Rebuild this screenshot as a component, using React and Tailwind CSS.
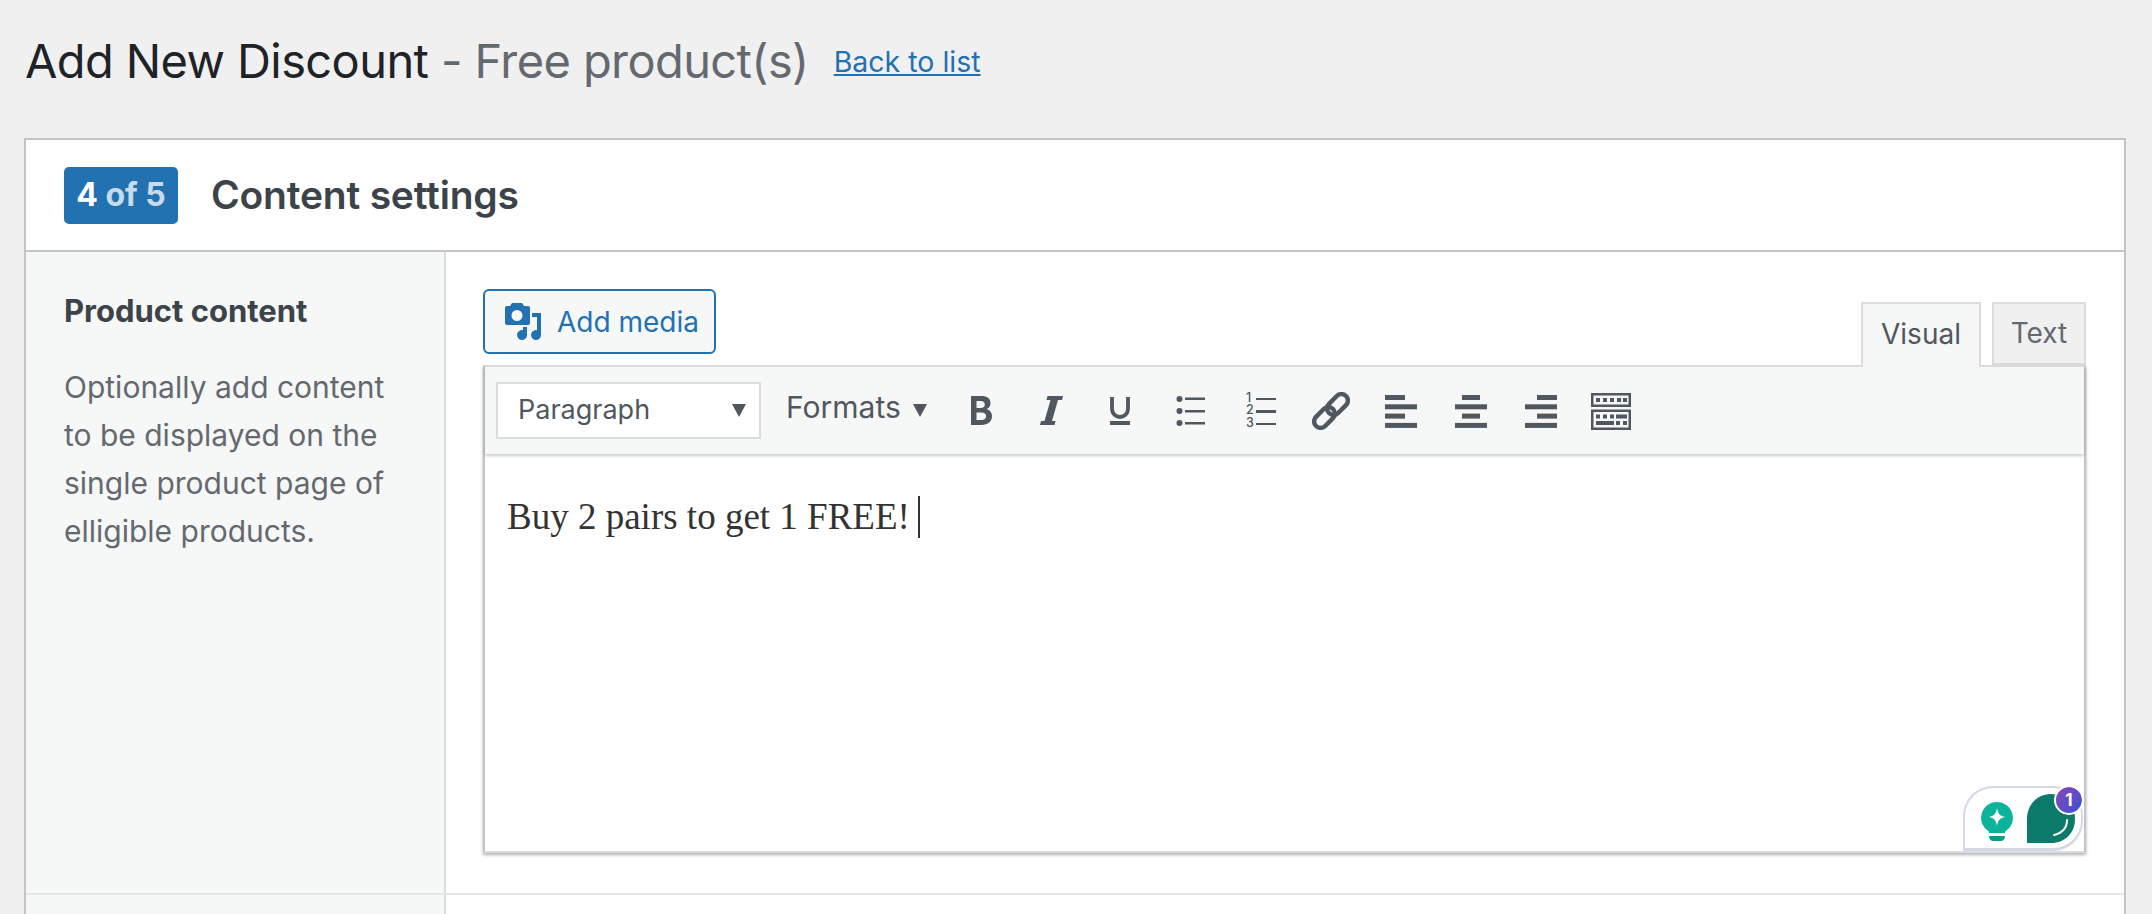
const sans = "font-['Inter','Liberation_Sans',sans-serif]";

function Caret() {
  return <span className="w-0 h-0 border-x-[7.5px] border-x-transparent border-t-[13px] border-t-[#50575e]" />;
}

function MediaIcon() {
  return (
    <svg width="38" height="38" viewBox="0 0 38 38" fill="#2271b1">
      <path fillRule="evenodd" d="M7 0h10l2 3h4a2 2 0 0 1 2 2v15a2 2 0 0 1-2 2H2a2 2 0 0 1-2-2V5a2 2 0 0 1 2-2h3zm5 7a5.500 5.500 0 1 0 0 11 5.500 5.500 0 0 0 0-11z" />
      <path d="M27 10h9v22a5 5 0 1 1-4-4.900V14h-5zM18 24h4v8a5 5 0 1 1-4-4.900z" />
    </svg>
  );
}

function BoldIcon() {
  return (
    <svg width="21" height="29" viewBox="0 0 21 29" fill="#50575e">
      <path fillRule="evenodd" d="M0 0h10.500c5.500 0 9 2.500 9 7.200 0 3-1.600 5-4 6 3.200.8 5.500 3 5.500 6.800 0 5.500-4 9-10.500 9H0zM5.500 5v7h4.300c2.500 0 4-1.300 4-3.500S12.300 5 9.800 5zM5.500 16.500V24h4.800c3 0 4.800-1.300 4.800-3.800s-1.800-3.700-4.800-3.700z" />
    </svg>
  );
}

function ItalicIcon() {
  return (
    <svg width="23" height="29" viewBox="0 0 23 29" fill="#50575e">
      <path d="M7.500 0H23l-1 4h-4L12 25h3.500l-1 4H0l1-4h3.500L10.500 4h-4z" />
    </svg>
  );
}

function UnderlineIcon() {
  return (
    <svg className="mr-[3px]" width="20" height="28" viewBox="0 0 20 28" fill="none" stroke="#50575e" strokeWidth="3.800">
      <path d="M2 0v12a8 8 0 0 0 16 0V0" />
      <rect x="0" y="24" width="20" height="4" fill="#50575e" stroke="none" />
    </svg>
  );
}

function BulletIcon() {
  return (
    <svg width="30" height="34" viewBox="0 0 30 34" fill="#50575e">
      <circle cx="3.500" cy="5" r="3" />
      <circle cx="3.500" cy="17" r="3" />
      <circle cx="3.500" cy="29" r="3" />
      <rect x="9" y="3.500" width="20" height="2.500" />
      <rect x="9" y="16" width="20" height="2.500" />
      <rect x="9" y="28" width="20" height="2.500" />
    </svg>
  );
}

function NumberIcon() {
  return (
    <div className="relative w-[30px] h-[36px]">
      <div className={`absolute left-0 top-[-1px] flex flex-col text-[12.5px] leading-[12.5px] font-medium text-[#50575e] ${sans}`}>
        <span>1</span>
        <span>2</span>
        <span>3</span>
      </div>
      <div className="absolute left-[10px] top-[5px] flex flex-col gap-[10px]">
        <span className="block w-[20px] h-[2.5px] bg-[#50575e]" />
        <span className="block w-[20px] h-[2.5px] bg-[#50575e]" />
        <span className="block w-[20px] h-[2.5px] bg-[#50575e]" />
      </div>
    </div>
  );
}

function LinkIcon() {
  return (
    <svg width="38" height="38" viewBox="0 0 38 38" fill="none" stroke="#50575e" strokeWidth="4.500">
      <rect x="-12" y="-6.500" width="24" height="13" rx="6.500" transform="translate(12.500 25.500) rotate(-45)" />
      <rect x="-12" y="-6.500" width="24" height="13" rx="6.500" transform="translate(25.500 12.500) rotate(-45)" />
    </svg>
  );
}

function AlignIcon({ bars }) {
  return (
    <svg width="32" height="34" viewBox="0 0 32 34" fill="#50575e">
      {bars.map(([x, w], i) => (
        <rect key={i} x={x} y={1 + i * 9.3} width={w} height="5" />
      ))}
    </svg>
  );
}

function ToolbarToggleIcon() {
  return (
    <svg width="40" height="38" viewBox="0 0 40 38" fill="#50575e">
      <path fillRule="evenodd" d="M0 1h40v14H0zM2.500 3.500v9h35v-9zM0 17.500h40V38H0zM2.500 20v15.500h35V20z" />
      <rect x="5" y="6" width="4" height="4" />
      <rect x="12" y="6" width="4" height="4" />
      <rect x="19" y="6" width="4" height="4" />
      <rect x="26" y="6" width="4" height="4" />
      <rect x="32" y="6" width="4" height="4" />
      <rect x="5" y="22.500" width="4" height="4" />
      <rect x="12" y="22.500" width="4" height="4" />
      <rect x="19" y="22.500" width="4" height="4" />
      <rect x="25" y="22.500" width="11" height="4" />
      <rect x="5" y="29" width="18" height="4" />
      <rect x="25" y="29" width="4" height="4" />
      <rect x="32" y="29" width="4" height="4" />
    </svg>
  );
}

function ToolButton({ children }) {
  return <div className="w-[70px] h-[40px] flex items-center justify-center">{children}</div>;
}

function GrammarlyWidget() {
  return (
    <div className="absolute right-[1px] bottom-[0px] w-[120px] h-[65px] bg-white border-2 border-[#d5d9e6] border-b-[3px] rounded-tl-[30px] rounded-tr-[30px] rounded-br-[30px]">
      <svg className="absolute left-[15px] top-[13px]" width="34" height="42" viewBox="0 0 34 42">
        <path d="M17 1a16 16 0 0 1 8 29.800V32H9v-1.200A16 16 0 0 1 17 1z" fill="#0ab39a" />
        <path d="M17 7c1 6 3 8 8 9-5 1-7 3-8 9-1-6-3-8-8-9 5-1 7-3 8-9z" fill="#fff" />
        <path d="M9 35h16c0 3-2 5-4 5h-8c-2 0-4-2-4-5z" fill="#0d9c86" />
      </svg>
      <svg className="absolute left-[61px] top-[6px]" width="50" height="50" viewBox="0 0 50 50">
        <path d="M25 0C11 0 1 11 1 25v24h24c14 0 24-10 24-24S39 0 25 0z" fill="#0b7a6b" />
        <path d="M41 26c0 8-5 13-13 15" fill="none" stroke="#fff" strokeWidth="2" strokeLinecap="round" />
      </svg>
      <div className={`absolute right-[-1px] top-[-1px] w-[26px] h-[26px] rounded-full bg-gradient-to-br from-[#8b3fb5] to-[#2a52d8] flex items-center justify-center text-white text-[17px] font-bold leading-none outline-2 outline-white ${sans}`}>
        1
      </div>
    </div>
  );
}

export default function App() {
  return (
    <div className={`h-[914px] overflow-hidden bg-[#f0f0f1] ${sans}`}>
      <div className="h-[138px] pl-[25px] pt-[29px] flex items-baseline">
        <h1 className="text-[47px] leading-[64px] font-normal text-[#1d2327] tracking-[-0.6px]">
          Add New Discount <span className="text-[#646970]">- Free product(s)</span>
        </h1>
        <a className="ml-[25px] text-[28.5px] text-[#2271b1] underline -translate-y-[6px]">Back to list</a>
      </div>

      <div className="ml-[24px] mr-[26px] border-2 border-b-0 border-[#c3c4c7] bg-white">
        <div className="h-[112px] pl-[38px] flex items-center gap-[33px] border-b-2 border-[#c3c4c7]">
          <span className="w-[114px] h-[57px] rounded-[5px] bg-[#2271b1] flex items-center justify-center text-[32px] font-bold text-white">
            4&nbsp;<span className="opacity-75">of 5</span>
          </span>
          <h2 className="text-[39px] font-semibold text-[#3c434a] tracking-[-0.2px]">Content settings</h2>
        </div>

        <div className="flex h-[643px] border-b-2 border-[#e8e8e9]">
          <div className="w-[420px] shrink-0 bg-[#f6f7f7] border-r-2 border-[#dcdcde] pl-[38px] pr-[30px] pt-[37px]">
            <h3 className="text-[31px] leading-[44px] font-bold text-[#3c434a]">Product content</h3>
            <p className="mt-[30px] text-[30px] leading-[48px] text-[#646970]">
              Optionally add content to be displayed on the single product page of elligible products.
            </p>
          </div>

          <div className="flex-1 pl-[37px] pr-[38px] pt-[37px]">
            <div className="flex justify-between h-[76px]">
              <button className="w-[233px] h-[65px] rounded-[6px] border-2 border-[#2271b1] bg-[#f6f7f7] flex items-center pl-[20px] gap-[14px] text-[28px] text-[#2271b1]">
                <MediaIcon />
                Add media
              </button>
              <div className="flex items-end gap-[11px] pt-[13px]">
                <div className="relative z-10 w-[120px] h-[65px] -mb-[2px] pb-[3px] bg-[#f6f7f7] border-2 border-b-0 border-[#dcdcde] flex items-center justify-center text-[28px] text-[#50575e]">
                  Visual
                </div>
                <div className="w-[94px] h-[63px] pb-[2px] bg-[#f0f0f1] border-2 border-[#dcdcde] flex items-center justify-center text-[28px] text-[#646970]">
                  Text
                </div>
              </div>
            </div>

            <div className="relative h-[488px] bg-white border-2 border-[#dcdcde] border-x-[#c3c4c7] shadow-[0_2px_3px_rgba(0,0,0,0.3)]">
              <div className="h-[87px] bg-[#f6f7f7] shadow-[0_2px_3px_rgba(0,0,0,0.2)] pl-[11px] flex items-center">
                <div className="w-[265px] h-[57px] bg-white border-2 border-[#dcdcde] flex items-center justify-between pl-[20px] pr-[13px] text-[27px] text-[#50575e]">
                  Paragraph
                  <Caret />
                </div>
                <div className="ml-[25px] w-[160px] h-[57px] pb-[6px] flex items-center text-[30px] text-[#50575e]">
                  Formats
                  <span className="ml-[12px] mt-[6px] flex"><Caret /></span>
                </div>
                <ToolButton><BoldIcon /></ToolButton>
                <ToolButton><ItalicIcon /></ToolButton>
                <ToolButton><UnderlineIcon /></ToolButton>
                <ToolButton><BulletIcon /></ToolButton>
                <ToolButton><NumberIcon /></ToolButton>
                <ToolButton><LinkIcon /></ToolButton>
                <ToolButton><AlignIcon bars={[[0, 20], [0, 32], [0, 20], [0, 32]]} /></ToolButton>
                <ToolButton><AlignIcon bars={[[7, 18], [0, 32], [7, 18], [0, 32]]} /></ToolButton>
                <ToolButton><AlignIcon bars={[[12, 20], [0, 32], [12, 20], [0, 32]]} /></ToolButton>
                <ToolButton><ToolbarToggleIcon /></ToolButton>
              </div>
              <div className="pl-[22px] pt-[40px] flex items-center font-['Liberation_Serif',serif] text-[37px] leading-[46px] text-[#333]">
                Buy 2 pairs to get 1 FREE!
                <span className="ml-[8px] w-[2px] h-[42px] bg-[#333]" />
              </div>
              <GrammarlyWidget />
            </div>
          </div>
        </div>

        <div className="flex h-[60px]">
          <div className="w-[420px] shrink-0 bg-[#f6f7f7] border-r-2 border-[#dcdcde]" />
          <div className="flex-1" />
        </div>
      </div>
    </div>
  );
}
